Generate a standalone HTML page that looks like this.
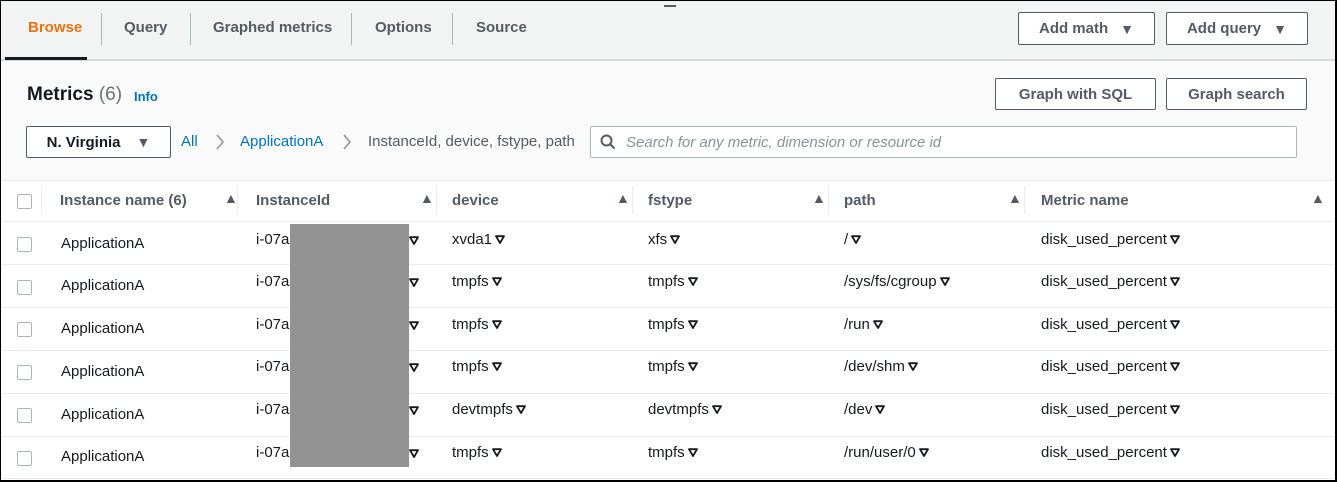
<!DOCTYPE html>
<html><head><style>
*{box-sizing:border-box;margin:0;padding:0}
body{width:1337px;height:482px;overflow:hidden;font-family:"Liberation Sans",sans-serif;color:#16191f;background:#fff;position:relative}
.frame{position:absolute;left:0;top:0;width:1337px;height:482px;border:1px solid #000;border-width:1px 2px 2px 1px;pointer-events:none;z-index:10}
.a{position:absolute;white-space:nowrap}
.tabbar{position:absolute;left:0;top:0;width:1337px;height:61px;background:#f2f3f3;border-bottom:2px solid #d5dbdb}
.tab{position:absolute;top:19px;font-size:15px;font-weight:bold;color:#545b64}
.sep{position:absolute;top:13px;width:1px;height:32px;background:#aab7b8}
.btn{position:absolute;border:1px solid #545b64;background:#fff;font-size:15px;font-weight:bold;color:#545b64;display:flex;align-items:center;justify-content:center;border-radius:2px}
.tri{font-size:14px;margin-left:12px}
.main{position:absolute;left:0;top:61px;width:1337px;height:120px;background:#fafafa}
.hdr{position:absolute;left:0;top:180px;width:1337px;height:42px;background:#fff;border-top:1px solid #eaeded;border-bottom:1px solid #eaeded}
.th{position:absolute;top:192px;font-size:15px;font-weight:bold;color:#545b64}
.cs{position:absolute;top:186px;width:1px;height:28px;background:#eaeded}
.sa{position:absolute;top:190px;font-size:14px;color:#545b64}
.row{position:absolute;left:0;width:1337px;height:1px;background:#eaeded}
.cb{position:absolute;left:17px;width:15px;height:15px;border:1.5px solid #aab7b8;border-radius:2px;background:#fff}
.td{position:absolute;font-size:15px;color:#16191f}
svg.t{display:inline-block;margin-left:3px;vertical-align:0}
</style></head><body>
<svg width="0" height="0" style="position:absolute"><defs><symbol id="tr" viewBox="0 0 10 9"><path d="M1 1.2H9L5 8Z" fill="none" stroke="#16191f" stroke-width="1.8" stroke-linejoin="round"/></symbol></defs></svg>
<div class="tabbar"></div>
<div class="a" style="left:664px;top:5px;width:12px;height:2px;background:#545b64"></div>
<div class="tab" style="left:28px;color:#ec7211">Browse</div>
<div class="a" style="left:5px;top:57px;width:82px;height:3px;background:#16191f"></div>
<div class="sep" style="left:101px"></div>
<div class="tab" style="left:124px">Query</div>
<div class="sep" style="left:190px"></div>
<div class="tab" style="left:213px">Graphed metrics</div>
<div class="sep" style="left:351px"></div>
<div class="tab" style="left:375px">Options</div>
<div class="sep" style="left:452px"></div>
<div class="tab" style="left:476px">Source</div>
<div class="btn" style="left:1018px;top:12px;width:137px;height:33px">Add math<span class="tri">▼</span></div>
<div class="btn" style="left:1166px;top:12px;width:142px;height:33px">Add query<span class="tri">▼</span></div>
<div class="main"></div>
<div class="a" style="left:27px;top:84px;font-size:19px;font-weight:bold">Metrics <span style="font-weight:normal;color:#687078">(6)</span></div>
<div class="a" style="left:134px;top:89px;font-size:13px;font-weight:bold;color:#0073bb">Info</div>
<div class="btn" style="left:995px;top:78px;width:161px;height:32px">Graph with SQL</div>
<div class="btn" style="left:1166px;top:78px;width:141px;height:32px">Graph search</div>
<div class="btn" style="left:26px;top:126px;width:145px;height:32px;color:#16191f;border-color:#545b64">N. Virginia<span class="tri" style="margin-left:16px;color:#545b64">▼</span></div>
<div class="a" style="left:181px;top:133px;font-size:15px;color:#0073bb">All</div>
<svg class="a" style="left:215px;top:134px" width="10" height="16" viewBox="0 0 10 16"><path d="M2 1L8 8L2 15" fill="none" stroke="#879596" stroke-width="1.5"/></svg>
<div class="a" style="left:240px;top:133px;font-size:15px;color:#0073bb">ApplicationA</div>
<svg class="a" style="left:342px;top:134px" width="10" height="16" viewBox="0 0 10 16"><path d="M2 1L8 8L2 15" fill="none" stroke="#879596" stroke-width="1.5"/></svg>
<div class="a" style="left:368px;top:133px;font-size:15px;color:#545b64">InstanceId, device, fstype, path</div>
<div class="a" style="left:590px;top:126px;width:707px;height:32px;border:1px solid #aab7b8;background:#fff;border-radius:2px"></div>
<svg class="a" style="left:600px;top:134px" width="16" height="16" viewBox="0 0 16 16"><circle cx="6.5" cy="6.5" r="5" fill="none" stroke="#545b64" stroke-width="2"/><line x1="10" y1="10" x2="14.5" y2="14.5" stroke="#545b64" stroke-width="2"/></svg>
<div class="a" style="left:626px;top:134px;font-size:15px;font-style:italic;color:#879596">Search for any metric, dimension or resource id</div>
<div class="hdr"></div>
<div class="cb" style="top:194px"></div>
<div class="cs" style="left:41px"></div><div class="cs" style="left:237px"></div><div class="cs" style="left:436px"></div><div class="cs" style="left:632px"></div><div class="cs" style="left:828px"></div><div class="cs" style="left:1024px"></div>
<div class="th" style="left:60px">Instance name&nbsp;(6)</div>
<div class="th" style="left:256px">InstanceId</div>
<div class="th" style="left:452px">device</div>
<div class="th" style="left:648px">fstype</div>
<div class="th" style="left:844px">path</div>
<div class="th" style="left:1041px">Metric name</div>
<div class="sa" style="left:224px">▲</div><div class="sa" style="left:420px">▲</div><div class="sa" style="left:616px">▲</div><div class="sa" style="left:812px">▲</div><div class="sa" style="left:1008px">▲</div><div class="sa" style="left:1311px">▲</div>
<div class="row" style="top:264px"></div><div class="row" style="top:307px"></div><div class="row" style="top:350px"></div><div class="row" style="top:393px"></div><div class="row" style="top:436px"></div><div class="row" style="top:478px"></div>

<div class="cb" style="top:237px"></div>
<div class="td" style="left:61px;top:235px">ApplicationA</div>
<div class="td" style="left:256px;top:231px">i-07a</div><svg class="a" style="left:409px;top:236px" width="10" height="9"><use href="#tr"/></svg>
<div class="td" style="left:452px;top:231px">xvda1<svg class="t" width="10" height="9"><use href="#tr"/></svg></div>
<div class="td" style="left:648px;top:231px">xfs<svg class="t" width="10" height="9"><use href="#tr"/></svg></div>
<div class="td" style="left:844px;top:231px">/<svg class="t" width="10" height="9"><use href="#tr"/></svg></div>
<div class="td" style="left:1041px;top:231px">disk_used_percent<svg class="t" width="10" height="9"><use href="#tr"/></svg></div>

<div class="cb" style="top:280px"></div>
<div class="td" style="left:61px;top:277px">ApplicationA</div>
<div class="td" style="left:256px;top:273px">i-07a</div><svg class="a" style="left:409px;top:278px" width="10" height="9"><use href="#tr"/></svg>
<div class="td" style="left:452px;top:273px">tmpfs<svg class="t" width="10" height="9"><use href="#tr"/></svg></div>
<div class="td" style="left:648px;top:273px">tmpfs<svg class="t" width="10" height="9"><use href="#tr"/></svg></div>
<div class="td" style="left:844px;top:273px">/sys/fs/cgroup<svg class="t" width="10" height="9"><use href="#tr"/></svg></div>
<div class="td" style="left:1041px;top:273px">disk_used_percent<svg class="t" width="10" height="9"><use href="#tr"/></svg></div>

<div class="cb" style="top:322px"></div>
<div class="td" style="left:61px;top:320px">ApplicationA</div>
<div class="td" style="left:256px;top:316px">i-07a</div><svg class="a" style="left:409px;top:321px" width="10" height="9"><use href="#tr"/></svg>
<div class="td" style="left:452px;top:316px">tmpfs<svg class="t" width="10" height="9"><use href="#tr"/></svg></div>
<div class="td" style="left:648px;top:316px">tmpfs<svg class="t" width="10" height="9"><use href="#tr"/></svg></div>
<div class="td" style="left:844px;top:316px">/run<svg class="t" width="10" height="9"><use href="#tr"/></svg></div>
<div class="td" style="left:1041px;top:316px">disk_used_percent<svg class="t" width="10" height="9"><use href="#tr"/></svg></div>

<div class="cb" style="top:365px"></div>
<div class="td" style="left:61px;top:363px">ApplicationA</div>
<div class="td" style="left:256px;top:358px">i-07a</div><svg class="a" style="left:409px;top:363px" width="10" height="9"><use href="#tr"/></svg>
<div class="td" style="left:452px;top:358px">tmpfs<svg class="t" width="10" height="9"><use href="#tr"/></svg></div>
<div class="td" style="left:648px;top:358px">tmpfs<svg class="t" width="10" height="9"><use href="#tr"/></svg></div>
<div class="td" style="left:844px;top:358px">/dev/shm<svg class="t" width="10" height="9"><use href="#tr"/></svg></div>
<div class="td" style="left:1041px;top:358px">disk_used_percent<svg class="t" width="10" height="9"><use href="#tr"/></svg></div>

<div class="cb" style="top:408px"></div>
<div class="td" style="left:61px;top:406px">ApplicationA</div>
<div class="td" style="left:256px;top:401px">i-07a</div><svg class="a" style="left:409px;top:406px" width="10" height="9"><use href="#tr"/></svg>
<div class="td" style="left:452px;top:401px">devtmpfs<svg class="t" width="10" height="9"><use href="#tr"/></svg></div>
<div class="td" style="left:648px;top:401px">devtmpfs<svg class="t" width="10" height="9"><use href="#tr"/></svg></div>
<div class="td" style="left:844px;top:401px">/dev<svg class="t" width="10" height="9"><use href="#tr"/></svg></div>
<div class="td" style="left:1041px;top:401px">disk_used_percent<svg class="t" width="10" height="9"><use href="#tr"/></svg></div>

<div class="cb" style="top:451px"></div>
<div class="td" style="left:61px;top:448px">ApplicationA</div>
<div class="td" style="left:256px;top:444px">i-07a</div><svg class="a" style="left:409px;top:449px" width="10" height="9"><use href="#tr"/></svg>
<div class="td" style="left:452px;top:444px">tmpfs<svg class="t" width="10" height="9"><use href="#tr"/></svg></div>
<div class="td" style="left:648px;top:444px">tmpfs<svg class="t" width="10" height="9"><use href="#tr"/></svg></div>
<div class="td" style="left:844px;top:444px">/run/user/0<svg class="t" width="10" height="9"><use href="#tr"/></svg></div>
<div class="td" style="left:1041px;top:444px">disk_used_percent<svg class="t" width="10" height="9"><use href="#tr"/></svg></div>

<div class="a" style="left:290px;top:224px;width:119px;height:243px;background:#939393"></div>
<div class="frame"></div>
</body></html>
